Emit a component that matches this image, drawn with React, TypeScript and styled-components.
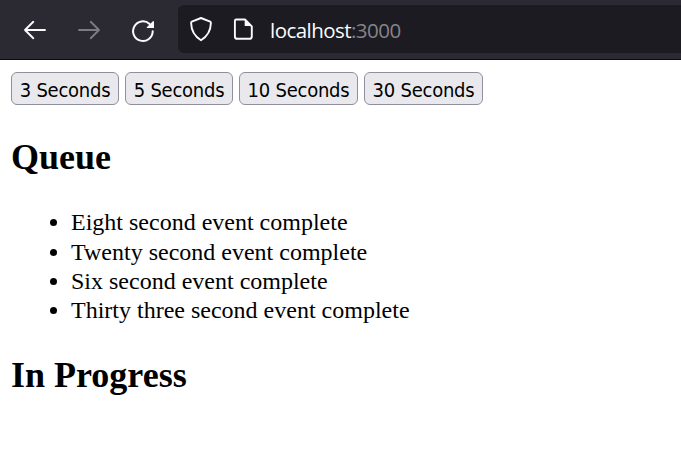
import React from "react";
import styled, { createGlobalStyle } from "styled-components";

const GlobalStyle = createGlobalStyle`
  body {
    margin: 0;
    background: #fff;
    color: #000;
    overflow: hidden;
  }
`;

const Toolbar = styled.header`
  box-sizing: border-box;
  display: flex;
  align-items: flex-start;
  height: 60px;
  padding: 5px 0 0 20px;
  background: #2b2a33;
  border-bottom: 1px solid #0c0c0d;
`;

const NavButtons = styled.nav`
  display: flex;
  gap: 24px;
  width: 158px;
  padding-top: 10px;
`;

const NavButton = styled.button<{ $muted?: boolean }>`
  display: flex;
  width: 30px;
  height: 30px;
  padding: 0;
  border: 0;
  background: none;
  color: ${(p) => (p.$muted ? "#7c7b82" : "#fbfbfe")};
`;

const AddressBar = styled.div`
  display: flex;
  flex: 1;
  align-items: center;
  height: 48px;
  padding-left: 8px;
  border-radius: 6px 0 0 6px;
  background: #1c1b22;
  color: #fbfbfe;
`;

const BarIcon = styled.svg`
  flex: none;
  margin-right: 12px;
`;

const Url = styled.span`
  padding-top: 2px;
  font: 20.5px/28px "Open Sans", "Noto Sans", sans-serif;
  letter-spacing: -0.54px;
  white-space: nowrap;
`;

const Port = styled.span`
  color: #85848a;
`;

const Page = styled.main`
  padding: 12px 11px;
  font: 24px/29.33px "Liberation Serif", "Times New Roman", serif;
`;

const ButtonRow = styled.div`
  display: flex;
  gap: 6px;
`;

const TimerButton = styled.button<{ $wide?: boolean }>`
  box-sizing: border-box;
  width: ${(p) => (p.$wide ? 119 : 108)}px;
  height: 33px;
  padding: 3px 0 0;
  border: 1px solid #8f8f9d;
  border-radius: 6px;
  background: #e9e9ed;
  color: #000;
  font: 20px/24px "DejaVu Sans Condensed", "DejaVu Sans", sans-serif;
  font-stretch: condensed;
  letter-spacing: -0.24px;
  white-space: nowrap;
`;

const Heading = styled.h2`
  margin: 31px 0 29.3px;
  font-size: 36px;
  line-height: 43px;
`;

const EventList = styled.ul`
  margin: 0 0 -2.3px;
  padding-left: 60px;
`;

const timers = [3, 5, 10, 30];
const queue = [
  "Eight second event complete",
  "Twenty second event complete",
  "Six second event complete",
  "Thirty three second event complete",
];

const Arrow = ({ flip = false }: { flip?: boolean }) => (
  <svg width="30" height="30" viewBox="0 0 30 30" fill="none" stroke="currentColor" strokeWidth="1.9" strokeLinecap="round" strokeLinejoin="round">
    <path d={flip ? "M5 15H25M16.7 6.8L25 15L16.7 23.2" : "M25 15H5M13.3 6.8L5 15L13.3 23.2"} />
  </svg>
);

const Reload = () => (
  <svg width="30" height="30" viewBox="0 0 30 30" fill="none">
    <path d="M24.7 16.2A9.8 9.8 0 1 1 21.6 9" stroke="currentColor" strokeWidth="2" strokeLinecap="round" />
    <path d="M26 6.7V13H19.2Q18.2 13 18.8 12.2L24.9 6.2Q26 5.5 26 6.7Z" fill="currentColor" />
  </svg>
);

export default function App() {
  return (
    <>
      <GlobalStyle />
      <Toolbar>
        <NavButtons>
          <NavButton aria-label="Back"><Arrow /></NavButton>
          <NavButton aria-label="Forward" $muted><Arrow flip /></NavButton>
          <NavButton aria-label="Reload"><Reload /></NavButton>
        </NavButtons>
        <AddressBar>
          <BarIcon width="30" height="30" viewBox="0 0 30 30" fill="none" stroke="currentColor" strokeWidth="1.9" strokeLinejoin="round">
            <path d="M15 4L24.2 7.6Q25 8 24.9 9C24.7 16.5 22 22 15 26.2C8 22 5.3 16.5 5.1 9Q5 8 5.8 7.6Z" />
          </BarIcon>
          <BarIcon width="30" height="30" viewBox="0 0 30 30" fill="none">
            <path d="M8.2 5.5H17L23.8 12.3V22.4Q23.8 24.8 21.4 24.8H9.3Q6.9 24.8 6.9 22.4V7Q6.9 5.5 8.2 5.5Z" stroke="currentColor" strokeWidth="1.9" strokeLinejoin="round" />
            <path d="M16.7 5V12H24Z" fill="currentColor" />
          </BarIcon>
          <Url>localhost<Port>:3000</Port></Url>
        </AddressBar>
      </Toolbar>
      <Page>
        <ButtonRow>
          {timers.map((seconds) => (
            <TimerButton key={seconds} $wide={seconds >= 10}>{seconds} Seconds</TimerButton>
          ))}
        </ButtonRow>
        <Heading>Queue</Heading>
        <EventList>
          {queue.map((event) => <li key={event}>{event}</li>)}
        </EventList>
        <Heading>In Progress</Heading>
      </Page>
    </>
  );
}
